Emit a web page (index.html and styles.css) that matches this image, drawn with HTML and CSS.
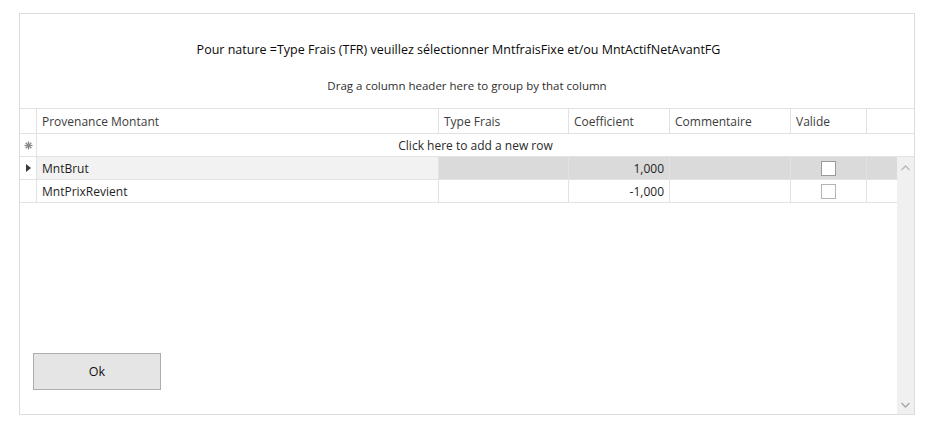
FILE: index.html
```html
<!DOCTYPE html>
<html lang="fr">
<head>
  <meta charset="UTF-8">
  <title>Provenance Montant</title>
  <link rel="stylesheet" href="styles.css">
</head>
<body>
  <div class="panel">
    <div class="message">
      <div class="title">Pour nature =Type Frais (TFR) veuillez sélectionner MntfraisFixe et/ou MntActifNetAvantFG</div>
      <div class="group-hint">Drag a column header here to group by that column</div>
    </div>

    <div class="grid">
      <div class="row head">
        <div class="sel"></div>
        <div class="cell">Provenance Montant</div>
        <div class="cell">Type Frais</div>
        <div class="cell">Coefficient</div>
        <div class="cell">Commentaire</div>
        <div class="cell">Valide</div>
        <div class="cell filler"></div>
      </div>

      <div class="new-row">
        <div class="sel">
          <svg width="9" height="9" viewBox="0 0 9 9"><g stroke="#8a8a8a" stroke-width="1.3"><line x1="4.5" y1="0.5" x2="4.5" y2="8.5"/><line x1="0.5" y1="4.5" x2="8.5" y2="4.5"/><line x1="1.7" y1="1.7" x2="7.3" y2="7.3"/><line x1="7.3" y1="1.7" x2="1.7" y2="7.3"/></g></svg>
        </div>
        <div class="new-text">Click here to add a new row</div>
      </div>

      <div class="body">
        <div class="rows">
          <div class="row data current">
            <div class="sel">
              <svg width="5" height="8" viewBox="0 0 5 8"><path d="M0 0 L5 4 L0 8 Z" fill="#3a3a3a"/></svg>
            </div>
            <div class="cell first">MntBrut</div>
            <div class="cell"></div>
            <div class="cell num">1,000</div>
            <div class="cell"></div>
            <div class="cell check"><span class="box"></span></div>
            <div class="cell filler"></div>
          </div>
          <div class="row data">
            <div class="sel"></div>
            <div class="cell first">MntPrixRevient</div>
            <div class="cell"></div>
            <div class="cell num">-1,000</div>
            <div class="cell"></div>
            <div class="cell check"><span class="box light"></span></div>
            <div class="cell filler"></div>
          </div>

          <div class="actions">
            <button class="btn">Ok</button>
          </div>
        </div>

        <div class="scrollbar">
          <svg width="9" height="6" viewBox="0 0 9 6"><path d="M0.5 5 L4.5 1 L8.5 5" fill="none" stroke="#b8b8b8" stroke-width="1.3"/></svg>
          <svg width="9" height="6" viewBox="0 0 9 6"><path d="M0.5 1 L4.5 5 L8.5 1" fill="none" stroke="#a6a6a6" stroke-width="1.3"/></svg>
        </div>
      </div>
    </div>
  </div>
</body>
</html>
```

FILE: styles.css
```css
body {
  margin: 0;
  background: #ffffff;
  font-family: 'Open Sans', 'Noto Sans', sans-serif;
  font-size: 12px;
  color: #1e1e1e;
}

.panel {
  margin: 13px 0 0 19px;
  width: 894px;
  height: 400px;
  border: 1px solid #dcdcdc;
  display: flex;
  flex-direction: column;
}

.message {
  height: 94px;
  text-align: center;
}

.title {
  padding: 27px 17px 0 0;
  font-size: 12.5px;
  color: #0a0a0a;
}

.group-hint {
  margin-top: 20px;
  font-size: 11.5px;
  color: #2e2e2e;
}

.grid {
  flex: 1;
  display: flex;
  flex-direction: column;
  border-top: 1px solid #e2e2e2;
}

.row {
  display: grid;
  grid-template-columns: 17px 402px 130px 101px 121px 76px 1fr;
  border-bottom: 1px solid #e2e2e2;
}

.row.head {
  height: 24px;
  color: #3c3c3c;
}

.row.data {
  height: 22px;
}

.sel {
  border-right: 1px solid #e2e2e2;
  display: flex;
  align-items: center;
  justify-content: center;
}

.cell {
  border-right: 1px solid #e2e2e2;
  padding: 0 5px;
  display: flex;
  align-items: center;
  white-space: nowrap;
}

.cell.filler {
  border-right: none;
}

.cell.num {
  justify-content: flex-end;
}

.cell.check {
  justify-content: center;
}

.box {
  width: 13px;
  height: 13px;
  background: #fff;
  border: 1px solid #9a9a9a;
}

.box.light {
  border-color: #b4b4b4;
}

.current .cell {
  background: #dadada;
}

.current .cell.first {
  background: #f2f2f2;
}

.new-row {
  display: flex;
  height: 22px;
  border-bottom: 1px solid #e2e2e2;
}

.new-row .sel {
  width: 16px;
}

.new-text {
  flex: 1;
  display: flex;
  align-items: center;
  justify-content: center;
  color: #2a2a2a;
}

.body {
  flex: 1;
  display: flex;
}

.rows {
  flex: 1;
  display: flex;
  flex-direction: column;
}

.actions {
  flex: 1;
  display: flex;
  align-items: flex-end;
  padding: 0 0 24px 13px;
}

.btn {
  width: 128px;
  height: 37px;
  background: #e5e5e5;
  border: 1px solid #adadad;
  font-family: 'Open Sans', 'Noto Sans', sans-serif;
  font-size: 12.5px;
  color: #111;
}

.scrollbar {
  width: 17px;
  background: #f0f0f0;
  display: flex;
  flex-direction: column;
  justify-content: space-between;
  align-items: center;
  padding: 8px 0 6px;
}
```
